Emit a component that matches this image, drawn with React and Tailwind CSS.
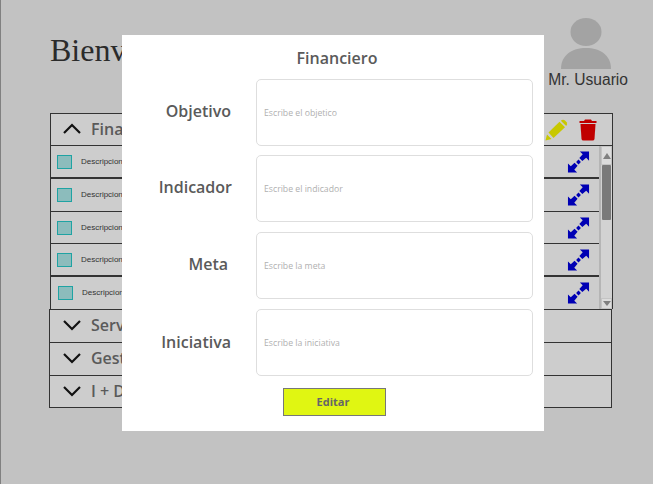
const rows = [
  { h: "h-[33px]", line: "border-b-2", offset: "pl-[6px]" },
  { h: "h-[33px]", line: "border-b", offset: "pl-[6px]" },
  { h: "h-[32px]", line: "border-b", offset: "pl-[6px]" },
  { h: "h-[33px]", line: "border-b-2", offset: "pl-[6px]" },
  { h: "h-[32px]", line: "", offset: "pl-[7px]" },
];

const sections = [
  { title: "Servicios", h: "h-[33px] border-b" },
  { title: "Gestión", h: "h-[33px] border-b" },
  { title: "I + D", h: "h-[32px] border-b" },
];

const fields = [
  { label: "Objetivo", placeholder: "Escribe el objetico", row: "mb-[9px]", text: "pr-[25px] pb-[4px]" },
  { label: "Indicador", placeholder: "Escribe el indicador", row: "mb-[10px]", text: "pr-[24px] pb-[4px]" },
  { label: "Meta", placeholder: "Escribe la meta", row: "mb-[10px]", text: "pr-[28px] pb-[4px]" },
  { label: "Iniciativa", placeholder: "Escribe la iniciativa", row: "", text: "pr-[25px] pb-[2px]" },
];

function Chevron({ up }) {
  return (
    <svg width="18" height="11" viewBox="0 0 18 11" fill="none" stroke="#111" strokeWidth="2.2">
      <path d={up ? "M1 10 L9 2 L17 10" : "M1 1 L9 9 L17 1"} />
    </svg>
  );
}

function Expand() {
  return (
    <svg width="23" height="22" viewBox="0 0 24 24" fill="#0000b4">
      <path d="M23.5 0.5 V10.5 L20.4 7.4 L16.2 11 L12.9 7.7 L16.6 3.6 L13.5 0.5 Z" />
      <path d="M0.5 23.5 V13.5 L3.6 16.6 L7.7 12.9 L11 16.2 L7.4 20.4 L10.5 23.5 Z" />
      <path d="M12 9.4 L14.6 12 L12 14.6 L9.4 12 Z" />
    </svg>
  );
}

export default function App() {
  return (
    <div className="relative h-[484px] w-[653px] overflow-hidden border-l border-[#808080] bg-[#c2c2c2]">
      <div className="flex h-[113px] justify-between pl-[49px] pr-[25px]">
        <h1 className="pt-[31px] font-['Liberation_Serif',serif] text-[32px] leading-[38px] text-[#2b2b2b]">Bienvenido</h1>
        <div className="flex flex-col items-center pt-[17px]">
          <svg className="mr-[4px]" width="52" height="52" viewBox="0 0 52 52" fill="#a3a3a3">
            <ellipse cx="26" cy="15" rx="15.5" ry="14" />
            <path d="M1 52 C1 38 12 31 26 31 C40 31 51 38 51 52 Z" />
          </svg>
          <span className="mt-[2px] font-['Liberation_Sans',sans-serif] text-[15.6px] leading-[18px] text-[#333]">Mr. Usuario</span>
        </div>
      </div>

      <div className="ml-[49px] w-[563px] border-x border-t border-[#333] bg-[#cdcdcd]">
        <div className="flex h-[32px] items-center border-b border-[#333] pl-[12px] pr-[15px]">
          <div className="mb-[2px] flex"><Chevron up /></div>
          <span className="mb-[2px] ml-[10px] font-['Open_Sans',sans-serif] text-[16px] font-semibold text-[#5a5a5a]">Financiero</span>
          <div className="ml-auto flex items-center gap-[11px]">
            <svg width="23" height="22" viewBox="0 0 23 22" fill="#c8c800">
              <path d="M0.5 21.5 L2 15.5 L6.5 20 Z" />
              <path d="M3.5 13.5 L14.5 2.8 L20 8.3 L8.5 19 Z" />
              <path d="M15.8 1.8 Q18 0 20 1.6 L21.6 3.2 Q23 5.2 21.2 7 Z" />
            </svg>
            <svg width="18" height="22" viewBox="0 0 18 22" fill="#c00000">
              <path d="M6 0.5 H12 L13 2 H17.5 V4 H0.5 V2 H5 Z" />
              <path d="M1.5 5 H16.5 L15.5 20 Q15.3 21.5 13.5 21.5 H4.5 Q2.7 21.5 2.5 20 Z" />
            </svg>
          </div>
        </div>
        <div className="flex h-[163px]">
          <div className="flex-1">
            {rows.map((row, i) => (
              <div key={i} className={`flex items-center pr-[9px] border-[#333] ${row.h} ${row.line} ${row.offset}`}>
                <div className="h-[14px] w-[15px] border border-[#1fa3a3] bg-[#8cbcbc]" />
                <span className="ml-[9px] font-['Liberation_Sans',sans-serif] text-[8px] text-[#333]">Descripcion</span>
                <div className="ml-auto flex"><Expand /></div>
              </div>
            ))}
          </div>
          <div className="flex w-[13px] flex-col items-center border-l-2 border-[#b5b5b5] bg-[#d2d2d2]">
            <div className="flex h-[19px] w-full items-center justify-center border border-[#c4c4c4] bg-[#dcdcdc]">
              <div className="border-x-[4px] border-b-[6px] border-x-transparent border-b-[#808080]" />
            </div>
            <div className="h-[55px] w-[9px] rounded-[1px] bg-[#7a7a7a]" />
            <div className="mt-auto flex h-[11px] w-full items-center justify-center border border-[#c4c4c4] bg-[#dcdcdc]">
              <div className="border-x-[4px] border-t-[5px] border-x-transparent border-t-[#808080]" />
            </div>
          </div>
        </div>
      </div>

      <div className="ml-[48px] w-[563px] border-x border-t border-[#333] bg-[#cdcdcd]">
        {sections.map((section) => (
          <div key={section.title} className={`flex items-center border-[#333] pl-[13px] ${section.h}`}>
            <div className="mb-[1px] flex"><Chevron /></div>
            <span className="mb-[2px] ml-[10px] font-['Open_Sans',sans-serif] text-[16px] font-semibold text-[#5a5a5a]">{section.title}</span>
          </div>
        ))}
      </div>

      <div className="absolute left-[121px] top-[35px] flex h-[396px] w-[422px] flex-col bg-white">
        <h2 className="pl-[8px] pt-[12px] text-center font-['Open_Sans',sans-serif] text-[16px] font-semibold leading-[22px] text-[#5a5a5a]">Financiero</h2>
        <div className="mt-[10px] flex flex-col pr-[11px]">
          {fields.map((field) => (
            <div key={field.label} className={`flex h-[67px] items-center ${field.row}`}>
              <label className={`w-[134px] text-right font-['Open_Sans',sans-serif] text-[16px] font-semibold text-[#5a5a5a] ${field.text}`}>{field.label}</label>
              <input
                readOnly
                placeholder={field.placeholder}
                className="h-full flex-1 rounded-[5px] border border-[#dedede] px-[7px] font-['Open_Sans',sans-serif] text-[8.7px] placeholder:text-[#b0b0b0]"
              />
            </div>
          ))}
        </div>
        <button className="ml-[161px] mt-[12px] h-[28px] w-[103px] border border-[#777] bg-[#e0f612] pr-[3px] font-['Open_Sans',sans-serif] text-[11px] font-bold text-[#666]">Editar</button>
      </div>
    </div>
  );
}
